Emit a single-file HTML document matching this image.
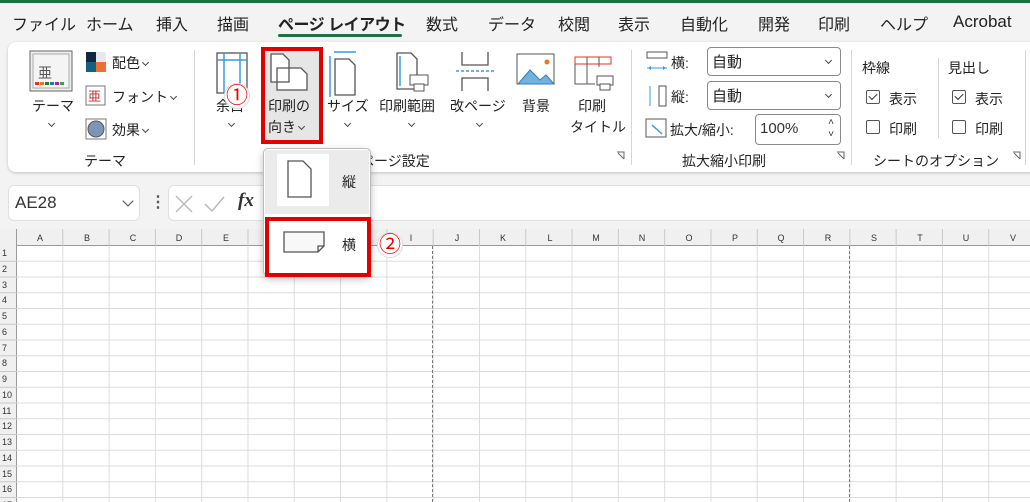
<!DOCTYPE html><html><head><meta charset="utf-8"><style>
*{margin:0;padding:0;box-sizing:border-box}
body{width:1030px;height:502px;overflow:hidden;background:#f3f3f3;font-family:"Liberation Sans","Noto Sans CJK JP",sans-serif;color:#222;position:relative}
.a{position:absolute;white-space:nowrap}
.tab{position:absolute;top:11px;font-size:16px;color:#222}
.t14{font-size:14px}
.sep{position:absolute;width:1px;background:#d6d6d6}
.chev{display:inline-block;width:5px;height:5px;border-right:1.2px solid #444;border-bottom:1.2px solid #444;transform:rotate(45deg);vertical-align:middle;margin:-4px 0 0 3px}
.cv{position:absolute;width:5px;height:5px;border-right:1.2px solid #444;border-bottom:1.2px solid #444;transform:rotate(45deg)}
.cb{position:absolute;width:14px;height:14px;border:1px solid #555;border-radius:2px;background:#fff}
.sel{position:absolute;border:1px solid #8a8a8a;border-radius:4px;background:#fff;font-size:15px;padding:3px 4px}
.circ{position:absolute;width:26px;height:26px;border-radius:50%;background:#fff;border:1px solid #ddd;color:#e00;font-size:22px;text-align:center;line-height:24px}
</style></head><body>
<div class="a" style="left:0;top:0;width:1030px;height:3px;background:#1e7145"></div>
<div class="tab" style="left:12px">ファイル</div>
<div class="tab" style="left:86px">ホーム</div>
<div class="tab" style="left:156px">挿入</div>
<div class="tab" style="left:217px">描画</div>
<div class="tab" style="left:278px;font-weight:bold;letter-spacing:-0.5px">ページ レイアウト</div>
<div class="a" style="left:278px;top:34px;width:124px;height:3px;background:#1e7145;border-radius:2px"></div>
<div class="tab" style="left:426px">数式</div>
<div class="tab" style="left:488px">データ</div>
<div class="tab" style="left:558px">校閲</div>
<div class="tab" style="left:618px">表示</div>
<div class="tab" style="left:680px">自動化</div>
<div class="tab" style="left:758px">開発</div>
<div class="tab" style="left:818px">印刷</div>
<div class="tab" style="left:880px">ヘルプ</div>
<div class="tab" style="left:953px;font-size:17px;top:12px">Acrobat</div>

<div class="a" style="left:8px;top:42px;width:1030px;height:130px;background:#fff;border-radius:8px;box-shadow:0 1px 3px rgba(0,0,0,.2)"></div>
<svg class="a" style="left:0;top:40px" width="1030" height="135">
<rect x="30" y="11" width="42" height="40" fill="#eee" stroke="#666"/>
<rect x="33" y="14" width="36" height="34" fill="#f4f4f4" stroke="#aaa"/>
<text x="38" y="38" font-size="14" fill="#555" font-family="Noto Sans CJK JP">亜</text>
<rect x="35" y="42" width="4" height="3" fill="#e03030"/><rect x="40" y="42" width="4" height="3" fill="#e07b20"/><rect x="45" y="42" width="4" height="3" fill="#208030"/><rect x="50" y="42" width="4" height="3" fill="#3070c0"/><rect x="55" y="42" width="4" height="3" fill="#9030a0"/><rect x="60" y="42" width="4" height="3" fill="#40a040"/>
<rect x="86" y="12" width="10" height="10" fill="#0e2841"/><rect x="96" y="12" width="10" height="10" fill="#e8e8e8"/><rect x="86" y="22" width="10" height="10" fill="#156082"/><rect x="96" y="22" width="10" height="10" fill="#e97132"/>
<rect x="86" y="46" width="19" height="19" fill="#fff" stroke="#777"/><text x="88" y="61" font-size="13" fill="#b33" font-family="Noto Sans CJK JP">亜</text>
<rect x="86" y="79" width="20" height="20" fill="#fff" stroke="#777"/><circle cx="96" cy="89" r="8" fill="#7d96b8" stroke="#556"/>
<rect x="217" y="13" width="30" height="40" fill="#fff" stroke="#555" stroke-width="1.3"/><line x1="224" y1="13" x2="224" y2="53" stroke="#3a9ad9" stroke-width="1.5"/><line x1="240" y1="13" x2="240" y2="53" stroke="#3a9ad9" stroke-width="1.5"/><line x1="217" y1="20" x2="247" y2="20" stroke="#3a9ad9" stroke-width="1.5"/>
<rect x="263" y="8" width="58" height="94" fill="#e6e6e6"/>
<path d="M271 14h12l6 6v22h-18z M277 28h24l6 6v16h-30z" fill="#fff" stroke="#555" stroke-width="1.3"/>
<line x1="334" y1="12" x2="356" y2="12" stroke="#3a9ad9" stroke-width="1.5"/><line x1="330" y1="16" x2="330" y2="57" stroke="#3a9ad9" stroke-width="1.5"/>
<path d="M335 19h14l6 6v30h-20z" fill="#fff" stroke="#555" stroke-width="1.3"/>
<path d="M397 13h14l6 6v30h-20z" fill="#fff" stroke="#555" stroke-width="1.3"/><path d="M400 16v30" stroke="#3a9ad9" stroke-width="1.5"/>
<rect x="410" y="35" width="18" height="10" fill="#fff" stroke="#555"/><rect x="414" y="44" width="10" height="7" fill="#fff" stroke="#555"/>
<path d="M462 12v13h26v-13 M462 51v-13h26v13" fill="none" stroke="#555" stroke-width="1.3"/><line x1="456" y1="31" x2="494" y2="31" stroke="#3a9ad9" stroke-dasharray="3 2" stroke-width="1.5"/>
<rect x="517" y="14" width="37" height="30" fill="#fff" stroke="#555"/><path d="M518 44l12-14 10 10 6-5 8 9z" fill="#6fb3e0" stroke="#3a7ab0"/><circle cx="547" cy="22" r="2.5" fill="#e07b20"/>
<rect x="575" y="17" width="36" height="7" fill="#fff" stroke="#e03030"/><path d="M575 24v20h20 M587 17v27 M599 17v10" fill="none" stroke="#555"/><rect x="597" y="36" width="16" height="9" fill="#fff" stroke="#555"/><rect x="600" y="44" width="10" height="6" fill="#fff" stroke="#555"/>
<path d="M647 12h20v6h-20z" fill="none" stroke="#555"/><path d="M647 28h20" stroke="#3a9ad9"/><path d="M648 28l3-2v4z M666 28l-3-2v4z" fill="#3a9ad9"/>
<path d="M659 46h7v20h-7z" fill="none" stroke="#555"/><path d="M650 46v20" stroke="#3a9ad9"/>
<rect x="646" y="79" width="20" height="18" fill="#fff" stroke="#555"/><path d="M652 85l10 9" stroke="#3a9ad9" stroke-width="1.5"/>
<path d="M617 112h7v7 M618 113l6 6" stroke="#666" fill="none"/><path d="M837 112h7v7 M838 113l6 6" stroke="#666" fill="none"/><path d="M1013 112h7v7 M1014 113l6 6" stroke="#666" fill="none"/>
</svg>
<div class="sep" style="left:194px;top:50px;height:115px"></div>
<div class="sep" style="left:631px;top:50px;height:115px"></div>
<div class="sep" style="left:851px;top:50px;height:115px"></div>
<div class="sep" style="left:938px;top:58px;height:80px"></div>
<div class="sep" style="left:1025px;top:50px;height:115px"></div>

<div class="a t14" style="left:32px;top:96px">テーマ</div><div class="cv" style="left:49px;top:121px"></div>
<div class="a t14" style="left:112px;top:53px">配色<span class="chev"></span></div>
<div class="a t14" style="left:112px;top:87px">フォント<span class="chev"></span></div>
<div class="a t14" style="left:112px;top:120px">効果<span class="chev"></span></div>
<div class="a t14" style="left:84px;top:151px">テーマ</div>
<div class="a t14" style="left:216px;top:96px">余白</div><div class="cv" style="left:229px;top:121px"></div>
<div class="a t14" style="left:268px;top:96px">印刷の</div><div class="a t14" style="left:268px;top:117px">向き<span class="chev"></span></div>
<div class="a t14" style="left:327px;top:96px">サイズ</div><div class="cv" style="left:345px;top:121px"></div>
<div class="a t14" style="left:379px;top:96px">印刷範囲</div><div class="cv" style="left:409px;top:121px"></div>
<div class="a t14" style="left:450px;top:96px">改ページ</div><div class="cv" style="left:477px;top:121px"></div>
<div class="a t14" style="left:522px;top:96px">背景</div>
<div class="a t14" style="left:578px;top:96px">印刷</div><div class="a t14" style="left:570px;top:117px">タイトル</div>
<div class="a t14" style="left:360px;top:151px">ページ設定</div>
<div class="a t14" style="left:671px;top:53px">横:</div>
<div class="a t14" style="left:671px;top:87px">縦:</div>
<div class="a t14" style="left:670px;top:120px">拡大/縮小:</div>
<div class="sel" style="left:707px;top:47px;width:134px;height:29px">自動<span class="cv" style="right:9px;top:10px"></span></div>
<div class="sel" style="left:707px;top:81px;width:134px;height:29px">自動<span class="cv" style="right:9px;top:10px"></span></div>
<div class="sel" style="left:755px;top:114px;width:86px;height:31px;color:#333;padding-top:5px">100%<span style="position:absolute;right:6px;top:2px;font-size:10px;line-height:12px">˄<br>˅</span></div>
<div class="a t14" style="left:682px;top:151px">拡大縮小印刷</div>
<div class="a t14" style="left:862px;top:58px">枠線</div>
<div class="a t14" style="left:948px;top:58px">見出し</div>
<div class="cb" style="left:866px;top:90px"></div><div class="a" style="left:869px;top:93px;width:8px;height:5px;border-left:1.3px solid #333;border-bottom:1.3px solid #333;transform:rotate(-45deg)"></div><div class="a t14" style="left:889px;top:89px">表示</div>
<div class="cb" style="left:866px;top:120px"></div><div class="a t14" style="left:889px;top:119px">印刷</div>
<div class="cb" style="left:952px;top:90px"></div><div class="a" style="left:955px;top:93px;width:8px;height:5px;border-left:1.3px solid #333;border-bottom:1.3px solid #333;transform:rotate(-45deg)"></div><div class="a t14" style="left:975px;top:89px">表示</div>
<div class="cb" style="left:952px;top:120px"></div><div class="a t14" style="left:975px;top:119px">印刷</div>
<div class="a t14" style="left:873px;top:151px">シートのオプション</div>

<div class="a" style="left:8px;top:185px;width:132px;height:36px;background:#fff;border-radius:6px;border:1px solid #e0e0e0"></div>
<div class="a" style="left:15px;top:193px;font-size:17px;color:#333">AE28</div>
<div class="a" style="left:124px;top:197px;width:8px;height:8px;border-right:1.5px solid #444;border-bottom:1.5px solid #444;transform:rotate(45deg)"></div>
<div class="a" style="left:150px;top:192px;font-size:16px;font-weight:bold;color:#555">⋮</div>
<div class="a" style="left:168px;top:185px;width:870px;height:36px;background:#fff;border-radius:6px;border:1px solid #e0e0e0"></div>
<svg class="a" style="left:170px;top:190px" width="70" height="28"><path d="M6 6l16 16M22 6l-16 16" stroke="#bbb" stroke-width="1.5"/><path d="M35 14l7 7 12-14" stroke="#bbb" stroke-width="1.5" fill="none"/></svg>
<div class="a" style="left:238px;top:190px;font-size:19px;font-style:italic;font-family:'Liberation Serif',serif;font-weight:bold;color:#333">fx</div>

<div class="a" style="left:0;top:229px;width:1030px;height:273px;background:#fff"></div>
<div class="a" style="left:0;top:229px;width:1030px;height:17px;background:#f0f0f0;border-bottom:1px solid #9a9a9a"></div>
<div class="a" style="left:0;top:229px;width:17px;height:273px;background:#f0f0f0;border-right:1px solid #9a9a9a"></div>
<div class="a" style="left:17px;top:246px;width:1013px;height:256px;background-image:linear-gradient(90deg,#dcdcdc 1px,transparent 1px),linear-gradient(#dcdcdc 1px,transparent 1px);background-size:46.3px 15.75px;background-position:-1px -1px"></div>
<div class="a" style="left:17px;top:229px;width:1013px;height:17px;background-image:linear-gradient(90deg,#c8c8c8 1px,transparent 1px);background-size:46.3px 17px;background-position:-1px 0"></div>
<div class="a" style="left:432px;top:246px;height:256px;border-left:1px dashed #777"></div>
<div class="a" style="left:849px;top:246px;height:256px;border-left:1px dashed #777"></div>
<div style="position:absolute;left:0;top:229px;font-size:9px;color:#333">
<span class="a" style="left:28px;top:4px;width:24px;text-align:center">A</span><span class="a" style="left:75px;top:4px;width:24px;text-align:center">B</span><span class="a" style="left:121px;top:4px;width:24px;text-align:center">C</span><span class="a" style="left:167px;top:4px;width:24px;text-align:center">D</span><span class="a" style="left:214px;top:4px;width:24px;text-align:center">E</span><span class="a" style="left:260px;top:4px;width:24px;text-align:center">F</span><span class="a" style="left:306px;top:4px;width:24px;text-align:center">G</span><span class="a" style="left:353px;top:4px;width:24px;text-align:center">H</span><span class="a" style="left:399px;top:4px;width:24px;text-align:center">I</span><span class="a" style="left:445px;top:4px;width:24px;text-align:center">J</span><span class="a" style="left:491px;top:4px;width:24px;text-align:center">K</span><span class="a" style="left:538px;top:4px;width:24px;text-align:center">L</span><span class="a" style="left:584px;top:4px;width:24px;text-align:center">M</span><span class="a" style="left:630px;top:4px;width:24px;text-align:center">N</span><span class="a" style="left:677px;top:4px;width:24px;text-align:center">O</span><span class="a" style="left:723px;top:4px;width:24px;text-align:center">P</span><span class="a" style="left:769px;top:4px;width:24px;text-align:center">Q</span><span class="a" style="left:816px;top:4px;width:24px;text-align:center">R</span><span class="a" style="left:862px;top:4px;width:24px;text-align:center">S</span><span class="a" style="left:908px;top:4px;width:24px;text-align:center">T</span><span class="a" style="left:954px;top:4px;width:24px;text-align:center">U</span><span class="a" style="left:1001px;top:4px;width:24px;text-align:center">V</span>
</div>
<div style="position:absolute;left:0;top:246px;font-size:9px;color:#333;width:17px;background-image:linear-gradient(#c8c8c8 1px,transparent 1px);background-size:17px 15.75px;height:256px;background-position:0 -1px;overflow:hidden">
<div style="line-height:15.75px;padding-left:2px">1<br>2<br>3<br>4<br>5<br>6<br>7<br>8<br>9<br>10<br>11<br>12<br>13<br>14<br>15<br>16<br>17</div></div>

<div class="a" style="left:263px;top:148px;width:108px;height:128px;background:#fff;border:1px solid #bbb;border-radius:5px;box-shadow:0 3px 8px rgba(0,0,0,.25)"></div>
<div class="a" style="left:265px;top:150px;width:104px;height:64px;background:#ebebeb"></div>
<div class="a" style="left:277px;top:154px;width:52px;height:52px;background:#fff"></div>
<svg class="a" style="left:263px;top:148px" width="108" height="128">
<path d="M25 13h15l8 8v28h-23z" fill="#fff" stroke="#555" stroke-width="1.3"/>
<path d="M21 84h40v14l-6 6h-34z M55 104v-6h6" fill="#f8f8f8" stroke="#555" stroke-width="1.3"/>
</svg>
<div class="a t14" style="left:342px;top:172px">縦</div>
<div class="a t14" style="left:342px;top:235px">横</div>

<div class="a" style="left:261px;top:47px;width:62px;height:97px;border:4px solid #e00000"></div>
<div class="a" style="left:265px;top:217px;width:106px;height:60px;border:4px solid #e00000"></div>
<div class="circ" style="left:224px;top:83px">①</div>
<div class="circ" style="left:377px;top:232px">②</div>
</body></html>
